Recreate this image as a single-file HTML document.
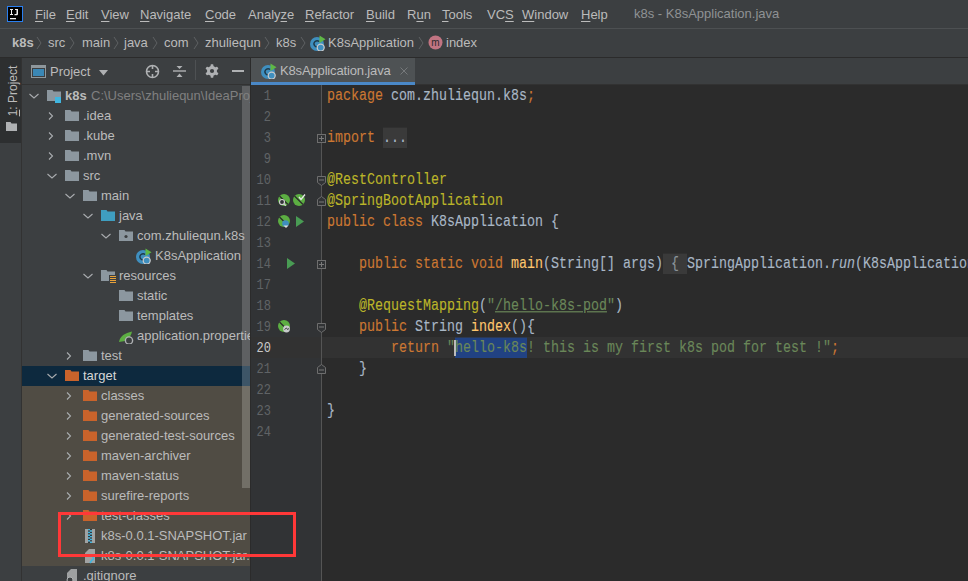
<!DOCTYPE html><html><head><meta charset="utf-8"><style>
*{margin:0;padding:0;box-sizing:border-box}
html,body{width:968px;height:581px;overflow:hidden;background:#3C3F41}
body{position:relative;font-family:"Liberation Sans",sans-serif;font-size:13px;color:#BBBBBB}
.abs{position:absolute}
.t{position:absolute;white-space:nowrap;line-height:16px}
.u{text-decoration:underline;text-underline-offset:2px}
.mono{font-family:"Liberation Mono",monospace;font-size:13.33px}
.cl{position:absolute;left:327px;white-space:pre;line-height:21px;height:21px;font-family:"Liberation Mono",monospace;font-size:13.33px;color:#A9B7C6;transform:translateY(1px) scaleY(1.2);transform-origin:0 14px;-webkit-text-stroke:0.1px currentColor}
.kw{color:#CC7832}
.an{color:#BBB529}
.st{color:#6A8759}
.ln{position:absolute;left:251px;width:20px;text-align:right;line-height:21px;font-family:"Liberation Mono",monospace;font-size:12px;color:#606366;transform:translateY(2px) scaleY(1.15);transform-origin:0 14px}
</style></head><body>
<div class="abs" style="left:0;top:28px;width:968px;height:1px;background:#4D5052"></div>
<svg style="position:absolute;left:7px;top:6px" width="16" height="16" viewBox="0 0 16 16"><rect x="0.5" y="0.5" width="15" height="15" fill="#000" stroke="#2A7FF0" stroke-width="1"/><path d="M3 3h3v1H5v4h1v1H3V8h1V4H3z" fill="#F0F0F0"/><path d="M8 3h3v5c0 1-.6 1.2-1.5 1.2H7.5V8H9c.4 0 .5-.2.5-.5V4H8z" fill="#F0F0F0"/><rect x="3" y="12" width="6" height="1.3" fill="#F0F0F0"/></svg>
<div class="t" style="left:35px;top:7px"><span class="u">F</span>ile</div>
<div class="t" style="left:66px;top:7px"><span class="u">E</span>dit</div>
<div class="t" style="left:101px;top:7px"><span class="u">V</span>iew</div>
<div class="t" style="left:140px;top:7px"><span class="u">N</span>avigate</div>
<div class="t" style="left:205px;top:7px"><span class="u">C</span>ode</div>
<div class="t" style="left:248px;top:7px">Analy<span class="u">z</span>e</div>
<div class="t" style="left:305px;top:7px"><span class="u">R</span>efactor</div>
<div class="t" style="left:366px;top:7px"><span class="u">B</span>uild</div>
<div class="t" style="left:407px;top:7px">R<span class="u">u</span>n</div>
<div class="t" style="left:442px;top:7px"><span class="u">T</span>ools</div>
<div class="t" style="left:487px;top:7px">VC<span class="u">S</span></div>
<div class="t" style="left:522px;top:7px"><span class="u">W</span>indow</div>
<div class="t" style="left:581px;top:7px"><span class="u">H</span>elp</div>
<div class="t" style="left:634px;top:6px;color:#8F9294">k8s - K8sApplication.java</div>
<div class="abs" style="left:0;top:57px;width:968px;height:1px;background:#2B2B2B"></div>
<div class="t" style="left:12px;top:35px;font-weight:bold">k8s</div>
<svg style="position:absolute;left:36px;top:36px" width="6" height="14" viewBox="0 0 6 14"><path d="M1 1l4 6-4 6" fill="none" stroke="#5E6163" stroke-width="1"/></svg>
<svg style="position:absolute;left:69px;top:36px" width="6" height="14" viewBox="0 0 6 14"><path d="M1 1l4 6-4 6" fill="none" stroke="#5E6163" stroke-width="1"/></svg>
<svg style="position:absolute;left:113px;top:36px" width="6" height="14" viewBox="0 0 6 14"><path d="M1 1l4 6-4 6" fill="none" stroke="#5E6163" stroke-width="1"/></svg>
<svg style="position:absolute;left:152px;top:36px" width="6" height="14" viewBox="0 0 6 14"><path d="M1 1l4 6-4 6" fill="none" stroke="#5E6163" stroke-width="1"/></svg>
<svg style="position:absolute;left:193px;top:36px" width="6" height="14" viewBox="0 0 6 14"><path d="M1 1l4 6-4 6" fill="none" stroke="#5E6163" stroke-width="1"/></svg>
<svg style="position:absolute;left:264px;top:36px" width="6" height="14" viewBox="0 0 6 14"><path d="M1 1l4 6-4 6" fill="none" stroke="#5E6163" stroke-width="1"/></svg>
<svg style="position:absolute;left:300px;top:36px" width="6" height="14" viewBox="0 0 6 14"><path d="M1 1l4 6-4 6" fill="none" stroke="#5E6163" stroke-width="1"/></svg>
<svg style="position:absolute;left:418px;top:36px" width="6" height="14" viewBox="0 0 6 14"><path d="M1 1l4 6-4 6" fill="none" stroke="#5E6163" stroke-width="1"/></svg>
<div class="t" style="left:48px;top:35px">src</div>
<div class="t" style="left:82px;top:35px">main</div>
<div class="t" style="left:124px;top:35px">java</div>
<div class="t" style="left:164px;top:35px">com</div>
<div class="t" style="left:205px;top:35px">zhuliequn</div>
<div class="t" style="left:276px;top:35px">k8s</div>
<svg style="position:absolute;left:310px;top:35px" width="16" height="16" viewBox="0 0 16 16"><circle cx="7" cy="9" r="7" fill="#3F8FBF"/><path d="M9.2 6.6A3.1 3.1 0 1 0 8.6 11.6" fill="none" stroke="#1F3A4A" stroke-width="1.4"/><path d="M9.5 0.5l6 3.8-6 3.8z" fill="#5FB846"/><circle cx="10.7" cy="12.6" r="3.5" fill="#3F8FBF" stroke="#C9CBCD" stroke-width="1.3"/></svg>
<div class="t" style="left:328px;top:35px">K8sApplication</div>
<svg style="position:absolute;left:428px;top:35px" width="15" height="15" viewBox="0 0 15 15"><circle cx="7.5" cy="7.5" r="7" fill="#F98B9E" fill-opacity=".7"/><text x="7.5" y="11" text-anchor="middle" font-family="Liberation Sans" font-size="10" fill="#2B2B2B">m</text></svg>
<div class="t" style="left:446px;top:35px">index</div>
<div class="abs" style="left:0;top:58px;width:21px;height:523px;background:#3C3F41"></div>
<div class="abs" style="left:0;top:58px;width:21px;height:85px;background:#2D2F30"></div>
<div class="abs" style="left:21px;top:58px;width:1px;height:523px;background:#323232"></div>
<div class="t" style="left:-22px;top:83px;width:70px;transform:rotate(-90deg);font-size:12px;text-align:center"><span class="u">1</span>: Project</div>
<svg style="position:absolute;left:6px;top:121px" width="12" height="12" viewBox="0 0 12 12"><path fill="#AFB1B3" d="M0 1h4.5l1 1.5H11V10H0z"/></svg>
<div class="abs" style="left:22px;top:84px;width:229px;height:1px;background:#323232"></div>
<svg style="position:absolute;left:31px;top:65px" width="15" height="13" viewBox="0 0 15 13"><rect x="0.5" y="0.5" width="14" height="12" fill="none" stroke="#8E979C" stroke-width="1"/><rect x="1" y="1" width="13" height="2" fill="#8E979C"/><rect x="2" y="4" width="11" height="7" fill="#3A87B5"/></svg>
<div class="t" style="left:50px;top:64px">Project</div>
<svg style="position:absolute;left:99px;top:70px" width="9" height="6" viewBox="0 0 9 6"><path d="M0 0h9L4.5 5.5z" fill="#AFB1B3"/></svg>
<svg style="position:absolute;left:145px;top:64px" width="15" height="15" viewBox="0 0 15 15"><circle cx="7.5" cy="7.5" r="6" fill="none" stroke="#AFB1B3" stroke-width="1.6"/><path d="M7.5 1v4M7.5 10v4M1 7.5h4M10 7.5h4" stroke="#AFB1B3" stroke-width="1.6"/></svg>
<svg style="position:absolute;left:173px;top:65px" width="13" height="13" viewBox="0 0 13 13"><path d="M0 6h13" stroke="#AFB1B3" stroke-width="1.4"/><path d="M3.5 1h6L6.5 4z M3.5 12h6L6.5 8.5z" fill="#AFB1B3"/></svg>
<div class="abs" style="left:195px;top:60px;width:1px;height:20px;background:#4E5153"></div>
<svg style="position:absolute;left:205px;top:64px" width="14" height="14" viewBox="0 0 14 14"><g fill="#AFB1B3"><circle cx="7" cy="7" r="5"/><rect x="5.6" y="0.3" width="2.8" height="13.4" rx="0.6" transform="rotate(0 7 7)"/><rect x="5.6" y="0.3" width="2.8" height="13.4" rx="0.6" transform="rotate(60 7 7)"/><rect x="5.6" y="0.3" width="2.8" height="13.4" rx="0.6" transform="rotate(120 7 7)"/></g><circle cx="7" cy="7" r="2.1" fill="#3C3F41"/></svg>
<div class="abs" style="left:232px;top:70px;width:12px;height:2px;background:#AFB1B3"></div>
<div class="abs" style="left:22px;top:366px;width:229px;height:20px;background:#0D293E"></div>
<div class="abs" style="left:22px;top:386px;width:229px;height:180px;background:#504C44"></div>
<div class="abs" style="left:242px;top:86px;width:8px;height:280px;background:#5E6062"></div>
<div class="abs" style="left:242px;top:366px;width:8px;height:20px;background:#3D5567"></div>
<div class="abs" style="left:242px;top:386px;width:8px;height:102px;background:#726F67"></div>
<div class="abs" style="left:22px;top:86px;width:228px;height:495px;overflow:hidden">
<svg style="position:absolute;left:6px;top:4px" width="12" height="12" viewBox="0 0 12 12"><path d="M1.5 4L6 8l4.5-4" fill="none" stroke="#A9ACAF" stroke-width="1.1"/></svg>
<svg style="position:absolute;left:24px;top:2px" width="16" height="16" viewBox="0 0 16 16"><path fill="#9AA7B0" fill-opacity="0.85" d="M1 2h5.5l1 1.5H15V13H1z"/><rect x="9" y="9" width="6" height="6" fill="#40B6E0"/></svg>
<div class="t" style="left:43px;top:2px;font-weight:bold">k8s</div>
<div class="t" style="left:69px;top:2px;color:#808080">C:\Users\zhuliequn\IdeaProjects\k8s</div>
<svg style="position:absolute;left:23px;top:24px" width="12" height="12" viewBox="0 0 12 12"><path d="M4 2.5l3.5 3.5L4 9.5" fill="none" stroke="#A9ACAF" stroke-width="1.1"/></svg>
<svg style="position:absolute;left:42px;top:22px" width="16" height="16" viewBox="0 0 16 16"><path fill="#9AA7B0" fill-opacity="0.85" d="M1 2h5.5l1 1.5H15V13H1z"/></svg>
<div class="t" style="left:61px;top:22px;color:#BBBBBB">.idea</div>
<svg style="position:absolute;left:23px;top:44px" width="12" height="12" viewBox="0 0 12 12"><path d="M4 2.5l3.5 3.5L4 9.5" fill="none" stroke="#A9ACAF" stroke-width="1.1"/></svg>
<svg style="position:absolute;left:42px;top:42px" width="16" height="16" viewBox="0 0 16 16"><path fill="#9AA7B0" fill-opacity="0.85" d="M1 2h5.5l1 1.5H15V13H1z"/></svg>
<div class="t" style="left:61px;top:42px;color:#BBBBBB">.kube</div>
<svg style="position:absolute;left:23px;top:64px" width="12" height="12" viewBox="0 0 12 12"><path d="M4 2.5l3.5 3.5L4 9.5" fill="none" stroke="#A9ACAF" stroke-width="1.1"/></svg>
<svg style="position:absolute;left:42px;top:62px" width="16" height="16" viewBox="0 0 16 16"><path fill="#9AA7B0" fill-opacity="0.85" d="M1 2h5.5l1 1.5H15V13H1z"/></svg>
<div class="t" style="left:61px;top:62px;color:#BBBBBB">.mvn</div>
<svg style="position:absolute;left:24px;top:84px" width="12" height="12" viewBox="0 0 12 12"><path d="M1.5 4L6 8l4.5-4" fill="none" stroke="#A9ACAF" stroke-width="1.1"/></svg>
<svg style="position:absolute;left:42px;top:82px" width="16" height="16" viewBox="0 0 16 16"><path fill="#9AA7B0" fill-opacity="0.85" d="M1 2h5.5l1 1.5H15V13H1z"/></svg>
<div class="t" style="left:61px;top:82px;color:#BBBBBB">src</div>
<svg style="position:absolute;left:42px;top:104px" width="12" height="12" viewBox="0 0 12 12"><path d="M1.5 4L6 8l4.5-4" fill="none" stroke="#A9ACAF" stroke-width="1.1"/></svg>
<svg style="position:absolute;left:60px;top:102px" width="16" height="16" viewBox="0 0 16 16"><path fill="#9AA7B0" fill-opacity="0.85" d="M1 2h5.5l1 1.5H15V13H1z"/></svg>
<div class="t" style="left:79px;top:102px;color:#BBBBBB">main</div>
<svg style="position:absolute;left:60px;top:124px" width="12" height="12" viewBox="0 0 12 12"><path d="M1.5 4L6 8l4.5-4" fill="none" stroke="#A9ACAF" stroke-width="1.1"/></svg>
<svg style="position:absolute;left:78px;top:122px" width="16" height="16" viewBox="0 0 16 16"><path fill="#40B6E0" fill-opacity="0.8" d="M1 2h5.5l1 1.5H15V13H1z"/></svg>
<div class="t" style="left:97px;top:122px;color:#BBBBBB">java</div>
<svg style="position:absolute;left:78px;top:144px" width="12" height="12" viewBox="0 0 12 12"><path d="M1.5 4L6 8l4.5-4" fill="none" stroke="#A9ACAF" stroke-width="1.1"/></svg>
<svg style="position:absolute;left:96px;top:142px" width="16" height="16" viewBox="0 0 16 16"><path fill="#9AA7B0" fill-opacity="0.85" d="M1 2h5.5l1 1.5H15V13H1z"/><circle cx="8" cy="8.5" r="1.6" fill="#3C3F41"/></svg>
<div class="t" style="left:115px;top:142px;color:#BBBBBB">com.zhuliequn.k8s</div>
<svg style="position:absolute;left:114px;top:162px" width="16" height="16" viewBox="0 0 16 16"><circle cx="7" cy="9" r="7" fill="#3F8FBF"/><path d="M9.2 6.6A3.1 3.1 0 1 0 8.6 11.6" fill="none" stroke="#1F3A4A" stroke-width="1.4"/><path d="M9.5 0.5l6 3.8-6 3.8z" fill="#5FB846"/><circle cx="10.7" cy="12.6" r="3.5" fill="#3F8FBF" stroke="#C9CBCD" stroke-width="1.3"/></svg>
<div class="t" style="left:133px;top:162px;color:#BBBBBB">K8sApplication</div>
<svg style="position:absolute;left:60px;top:184px" width="12" height="12" viewBox="0 0 12 12"><path d="M1.5 4L6 8l4.5-4" fill="none" stroke="#A9ACAF" stroke-width="1.1"/></svg>
<svg style="position:absolute;left:78px;top:182px" width="16" height="16" viewBox="0 0 16 16"><path fill="#9AA7B0" fill-opacity="0.85" d="M1 2h5.5l1 1.5H15V13H1z"/><rect x="9" y="7" width="7" height="9" fill="#3C3F41"/><path d="M10 8.5h6M10 10.5h6M10 12.5h6M10 14.5h6" stroke="#E8A23A" stroke-width="1"/></svg>
<div class="t" style="left:97px;top:182px;color:#BBBBBB">resources</div>
<svg style="position:absolute;left:96px;top:202px" width="16" height="16" viewBox="0 0 16 16"><path fill="#9AA7B0" fill-opacity="0.85" d="M1 2h5.5l1 1.5H15V13H1z"/></svg>
<div class="t" style="left:115px;top:202px;color:#BBBBBB">static</div>
<svg style="position:absolute;left:96px;top:222px" width="16" height="16" viewBox="0 0 16 16"><path fill="#9AA7B0" fill-opacity="0.85" d="M1 2h5.5l1 1.5H15V13H1z"/></svg>
<div class="t" style="left:115px;top:222px;color:#BBBBBB">templates</div>
<svg style="position:absolute;left:96px;top:242px" width="16" height="16" viewBox="0 0 16 16"><path d="M1 14C2 8 7 5 14 3.5C13 9 9 13 4 13.5z" fill="#5CAE42"/><circle cx="11" cy="12.5" r="3.6" fill="#3C3F41" stroke="#AFB1B3" stroke-width="1.4"/></svg>
<div class="t" style="left:115px;top:242px;color:#BBBBBB">application.properties</div>
<svg style="position:absolute;left:41px;top:264px" width="12" height="12" viewBox="0 0 12 12"><path d="M4 2.5l3.5 3.5L4 9.5" fill="none" stroke="#A9ACAF" stroke-width="1.1"/></svg>
<svg style="position:absolute;left:60px;top:262px" width="16" height="16" viewBox="0 0 16 16"><path fill="#9AA7B0" fill-opacity="0.85" d="M1 2h5.5l1 1.5H15V13H1z"/></svg>
<div class="t" style="left:79px;top:262px;color:#BBBBBB">test</div>
<svg style="position:absolute;left:24px;top:284px" width="12" height="12" viewBox="0 0 12 12"><path d="M1.5 4L6 8l4.5-4" fill="none" stroke="#A9ACAF" stroke-width="1.1"/></svg>
<svg style="position:absolute;left:42px;top:282px" width="16" height="16" viewBox="0 0 16 16"><path fill="#C9632B" fill-opacity="1" d="M1 2h5.5l1 1.5H15V13H1z"/></svg>
<div class="t" style="left:61px;top:282px;color:#D6D6D6">target</div>
<svg style="position:absolute;left:41px;top:304px" width="12" height="12" viewBox="0 0 12 12"><path d="M4 2.5l3.5 3.5L4 9.5" fill="none" stroke="#A9ACAF" stroke-width="1.1"/></svg>
<svg style="position:absolute;left:60px;top:302px" width="16" height="16" viewBox="0 0 16 16"><path fill="#C9632B" fill-opacity="1" d="M1 2h5.5l1 1.5H15V13H1z"/></svg>
<div class="t" style="left:79px;top:302px;color:#BBBBBB">classes</div>
<svg style="position:absolute;left:41px;top:324px" width="12" height="12" viewBox="0 0 12 12"><path d="M4 2.5l3.5 3.5L4 9.5" fill="none" stroke="#A9ACAF" stroke-width="1.1"/></svg>
<svg style="position:absolute;left:60px;top:322px" width="16" height="16" viewBox="0 0 16 16"><path fill="#C9632B" fill-opacity="1" d="M1 2h5.5l1 1.5H15V13H1z"/></svg>
<div class="t" style="left:79px;top:322px;color:#BBBBBB">generated-sources</div>
<svg style="position:absolute;left:41px;top:344px" width="12" height="12" viewBox="0 0 12 12"><path d="M4 2.5l3.5 3.5L4 9.5" fill="none" stroke="#A9ACAF" stroke-width="1.1"/></svg>
<svg style="position:absolute;left:60px;top:342px" width="16" height="16" viewBox="0 0 16 16"><path fill="#C9632B" fill-opacity="1" d="M1 2h5.5l1 1.5H15V13H1z"/></svg>
<div class="t" style="left:79px;top:342px;color:#BBBBBB">generated-test-sources</div>
<svg style="position:absolute;left:41px;top:364px" width="12" height="12" viewBox="0 0 12 12"><path d="M4 2.5l3.5 3.5L4 9.5" fill="none" stroke="#A9ACAF" stroke-width="1.1"/></svg>
<svg style="position:absolute;left:60px;top:362px" width="16" height="16" viewBox="0 0 16 16"><path fill="#C9632B" fill-opacity="1" d="M1 2h5.5l1 1.5H15V13H1z"/></svg>
<div class="t" style="left:79px;top:362px;color:#BBBBBB">maven-archiver</div>
<svg style="position:absolute;left:41px;top:384px" width="12" height="12" viewBox="0 0 12 12"><path d="M4 2.5l3.5 3.5L4 9.5" fill="none" stroke="#A9ACAF" stroke-width="1.1"/></svg>
<svg style="position:absolute;left:60px;top:382px" width="16" height="16" viewBox="0 0 16 16"><path fill="#C9632B" fill-opacity="1" d="M1 2h5.5l1 1.5H15V13H1z"/></svg>
<div class="t" style="left:79px;top:382px;color:#BBBBBB">maven-status</div>
<svg style="position:absolute;left:41px;top:404px" width="12" height="12" viewBox="0 0 12 12"><path d="M4 2.5l3.5 3.5L4 9.5" fill="none" stroke="#A9ACAF" stroke-width="1.1"/></svg>
<svg style="position:absolute;left:60px;top:402px" width="16" height="16" viewBox="0 0 16 16"><path fill="#C9632B" fill-opacity="1" d="M1 2h5.5l1 1.5H15V13H1z"/></svg>
<div class="t" style="left:79px;top:402px;color:#BBBBBB">surefire-reports</div>
<svg style="position:absolute;left:41px;top:424px" width="12" height="12" viewBox="0 0 12 12"><path d="M4 2.5l3.5 3.5L4 9.5" fill="none" stroke="#A9ACAF" stroke-width="1.1"/></svg>
<svg style="position:absolute;left:60px;top:422px" width="16" height="16" viewBox="0 0 16 16"><path fill="#C9632B" fill-opacity="1" d="M1 2h5.5l1 1.5H15V13H1z"/></svg>
<div class="t" style="left:79px;top:422px;color:#BBBBBB">test-classes</div>
<svg style="position:absolute;left:60px;top:442px" width="16" height="16" viewBox="0 0 16 16"><rect x="3" y="1" width="10" height="14" fill="#AFB1B3" fill-opacity=".85"/><rect x="6" y="1.0" width="2" height="1.4" fill="#40B6E0"/><rect x="8" y="1.0" width="2" height="1.4" fill="#2D3A40"/><rect x="8" y="2.4" width="2" height="1.4" fill="#40B6E0"/><rect x="6" y="2.4" width="2" height="1.4" fill="#2D3A40"/><rect x="6" y="3.8" width="2" height="1.4" fill="#40B6E0"/><rect x="8" y="3.8" width="2" height="1.4" fill="#2D3A40"/><rect x="8" y="5.2" width="2" height="1.4" fill="#40B6E0"/><rect x="6" y="5.2" width="2" height="1.4" fill="#2D3A40"/><rect x="6" y="6.6" width="2" height="1.4" fill="#40B6E0"/><rect x="8" y="6.6" width="2" height="1.4" fill="#2D3A40"/><rect x="8" y="8.0" width="2" height="1.4" fill="#40B6E0"/><rect x="6" y="8.0" width="2" height="1.4" fill="#2D3A40"/><rect x="6" y="9.4" width="2" height="1.4" fill="#40B6E0"/><rect x="8" y="9.4" width="2" height="1.4" fill="#2D3A40"/><rect x="8" y="10.8" width="2" height="1.4" fill="#40B6E0"/><rect x="6" y="10.8" width="2" height="1.4" fill="#2D3A40"/><rect x="6" y="12.2" width="2" height="1.4" fill="#40B6E0"/><rect x="8" y="12.2" width="2" height="1.4" fill="#2D3A40"/><rect x="8" y="13.6" width="2" height="1.4" fill="#40B6E0"/><rect x="6" y="13.6" width="2" height="1.4" fill="#2D3A40"/></svg>
<div class="t" style="left:79px;top:442px;color:#BBBBBB">k8s-0.0.1-SNAPSHOT.jar</div>
<svg style="position:absolute;left:60px;top:462px" width="16" height="16" viewBox="0 0 16 16"><path d="M7 1h6v14H3V5z" fill="#AFB1B3" fill-opacity=".85"/><path d="M10 9c2 0 2 3 0 3l-2 3" fill="none" stroke="#40B6E0" stroke-width="1.5"/></svg>
<div class="t" style="left:79px;top:462px;color:#BBBBBB">k8s-0.0.1-SNAPSHOT.jar.original</div>
<svg style="position:absolute;left:42px;top:482px" width="16" height="16" viewBox="0 0 16 16"><path d="M7 1h6v14H3V5z" fill="#AFB1B3" fill-opacity=".85"/><circle cx="6" cy="12" r="3" fill="#3C3F41" stroke="#AFB1B3"/></svg>
<div class="t" style="left:61px;top:482px;color:#BBBBBB">.gitignore</div>
</div>
<div class="abs" style="left:251px;top:58px;width:717px;height:27px;background:#3C3F41"></div>
<div class="abs" style="left:251px;top:84px;width:717px;height:1px;background:#323232"></div>
<div class="abs" style="left:251px;top:58px;width:164px;height:27px;background:#4E5254"></div>
<div class="abs" style="left:251px;top:82px;width:164px;height:3px;background:#4A88C7"></div>
<svg style="position:absolute;left:261px;top:63px" width="16" height="16" viewBox="0 0 16 16"><circle cx="7" cy="9" r="7" fill="#3F8FBF"/><path d="M9.2 6.6A3.1 3.1 0 1 0 8.6 11.6" fill="none" stroke="#1F3A4A" stroke-width="1.4"/><path d="M9.5 0.5l6 3.8-6 3.8z" fill="#5FB846"/><circle cx="10.7" cy="12.6" r="3.5" fill="#3F8FBF" stroke="#C9CBCD" stroke-width="1.3"/></svg>
<div class="t" style="left:280px;top:63px;letter-spacing:-0.15px">K8sApplication.java</div>
<svg style="position:absolute;left:399px;top:66px" width="10" height="10" viewBox="0 0 10 10"><path d="M1.5 1.5l7 7M8.5 1.5l-7 7" stroke="#76797B" stroke-width="1"/></svg>
<div class="abs" style="left:250px;top:58px;width:1px;height:523px;background:#2B2B2B"></div>
<div class="abs" style="left:251px;top:85px;width:71px;height:496px;background:#313335"></div>
<div class="abs" style="left:322px;top:85px;width:646px;height:496px;background:#2B2B2B"></div>
<div class="abs" style="left:321px;top:85px;width:1px;height:496px;background:#555555"></div>
<div class="abs" style="left:251px;top:337px;width:717px;height:21px;background:#323232"></div>
<div class="abs" style="left:321px;top:337px;width:1px;height:21px;background:#555555"></div>
<div class="ln" style="top:85px;color:#606366">1</div>
<div class="ln" style="top:106px;color:#606366">2</div>
<div class="ln" style="top:127px;color:#606366">3</div>
<div class="ln" style="top:148px;color:#606366">9</div>
<div class="ln" style="top:169px;color:#606366">10</div>
<div class="ln" style="top:190px;color:#606366">11</div>
<div class="ln" style="top:211px;color:#606366">12</div>
<div class="ln" style="top:232px;color:#606366">13</div>
<div class="ln" style="top:253px;color:#606366">14</div>
<div class="ln" style="top:274px;color:#606366">17</div>
<div class="ln" style="top:295px;color:#606366">18</div>
<div class="ln" style="top:316px;color:#606366">19</div>
<div class="ln" style="top:337px;color:#C8C8C8">20</div>
<div class="ln" style="top:358px;color:#606366">21</div>
<div class="ln" style="top:379px;color:#606366">22</div>
<div class="ln" style="top:400px;color:#606366">23</div>
<div class="ln" style="top:421px;color:#606366">24</div>
<div class="cl" style="top:85px"><span class="kw">package</span> com.zhuliequn.k8s<span class="kw">;</span></div>
<div class="cl" style="top:106px"></div>
<div class="cl" style="top:127px"><span class="kw">import</span> <span style="background:#3A3A3A;color:#A9B7C6;padding:1.25px 0 0.7px">...</span></div>
<div class="cl" style="top:148px"></div>
<div class="cl" style="top:169px"><span class="an">@RestController</span></div>
<div class="cl" style="top:190px"><span class="an">@SpringBootApplication</span></div>
<div class="cl" style="top:211px"><span class="kw">public class</span> K8sApplication {</div>
<div class="cl" style="top:232px"></div>
<div class="cl" style="top:253px">    <span class="kw">public static void</span> <span style="color:#FFC66D">main</span>(String[] args)<span style="background:#3A3A3A;padding:1.25px 0 0.7px;color:#8A949B"> { </span>SpringApplication.<i>run</i>(K8sApplication.<span class="kw">class</span>, args)<span class="kw">;</span> }</div>
<div class="cl" style="top:274px"></div>
<div class="cl" style="top:295px">    <span class="an">@RequestMapping</span>(<span class="st">"<u>/hello-k8s-pod</u>"</span>)</div>
<div class="cl" style="top:316px">    <span class="kw">public</span> String <span style="color:#FFC66D">index</span>(){</div>
<div class="cl" style="top:337px">        <span class="kw">return</span> <span class="st">"<span style="background:#214283;padding:1.25px 0 0.7px">hello-k8s</span>! this is my first k8s pod for test !"</span><span class="kw">;</span></div>
<div class="cl" style="top:358px">    }</div>
<div class="cl" style="top:379px"></div>
<div class="cl" style="top:400px">}</div>
<div class="cl" style="top:421px"></div>
<div class="abs" style="left:454px;top:340px;width:2px;height:16px;background:#BBBBBB"></div>
<svg style="position:absolute;left:316px;top:133px" width="11" height="11" viewBox="0 0 11 11"><rect x="1.5" y="1.5" width="8" height="8" fill="#313335" stroke="#6E6E6E"/><path d="M3 5.5h5M5.5 3v5" stroke="#7A7A7A"/></svg>
<svg style="position:absolute;left:316px;top:175px" width="11" height="11" viewBox="0 0 11 11"><path d="M1.5 1.5h8v6l-4 3-4-3z" fill="#313335" stroke="#6E6E6E"/><path d="M3 5h5" stroke="#7A7A7A"/></svg>
<svg style="position:absolute;left:316px;top:196px" width="11" height="11" viewBox="0 0 11 11"><path d="M1.5 9.5h8v-6l-4-3-4 3z" fill="#313335" stroke="#6E6E6E"/><path d="M3 6h5" stroke="#7A7A7A"/></svg>
<svg style="position:absolute;left:316px;top:259px" width="11" height="11" viewBox="0 0 11 11"><rect x="1.5" y="1.5" width="8" height="8" fill="#313335" stroke="#6E6E6E"/><path d="M3 5.5h5M5.5 3v5" stroke="#7A7A7A"/></svg>
<svg style="position:absolute;left:316px;top:322px" width="11" height="11" viewBox="0 0 11 11"><path d="M1.5 1.5h8v6l-4 3-4-3z" fill="#313335" stroke="#6E6E6E"/><path d="M3 5h5" stroke="#7A7A7A"/></svg>
<svg style="position:absolute;left:316px;top:364px" width="11" height="11" viewBox="0 0 11 11"><path d="M1.5 9.5h8v-6l-4-3-4 3z" fill="#313335" stroke="#6E6E6E"/><path d="M3 6h5" stroke="#7A7A7A"/></svg>
<svg style="position:absolute;left:277px;top:193px" width="14" height="14" viewBox="0 0 14 14"><circle cx="7" cy="7" r="6" fill="#5CAE42"/><path d="M2.5 3l8.5 8.5" stroke="#2B2B2B" stroke-width="1.2"/><circle cx="5" cy="9" r="2.5" fill="#313335" stroke="#CFCFCF" stroke-width="1.2"/><path d="M6.8 10.8l2 2" stroke="#CFCFCF" stroke-width="1.4"/></svg>
<svg style="position:absolute;left:292px;top:193px" width="14" height="14" viewBox="0 0 14 14"><circle cx="7" cy="7" r="6" fill="#5CAE42"/><path d="M2.5 3l8.5 8.5" stroke="#2B2B2B" stroke-width="1.2"/><path d="M7 4l2 2.5 4-5" fill="none" stroke="#E8E8E8" stroke-width="1.3"/></svg>
<svg style="position:absolute;left:277px;top:214px" width="14" height="14" viewBox="0 0 14 14"><circle cx="7" cy="7" r="6" fill="#5CAE42"/><path d="M2.5 3l8.5 8.5" stroke="#2B2B2B" stroke-width="1.2"/><circle cx="8.5" cy="9.5" r="3.3" fill="#3F8FBF"/><path d="M6.5 11.5h5l-2.5 2.5z" fill="#DDDDDD"/></svg>
<svg style="position:absolute;left:296px;top:216px" width="9" height="11" viewBox="0 0 9 11"><path d="M0 0l8 5.5L0 11z" fill="#499C54"/></svg>
<svg style="position:absolute;left:287px;top:258px" width="9" height="11" viewBox="0 0 9 11"><path d="M0 0l8 5.5L0 11z" fill="#499C54"/></svg>
<svg style="position:absolute;left:277px;top:319px" width="14" height="14" viewBox="0 0 14 14"><circle cx="7" cy="7" r="6" fill="#5CAE42"/><path d="M2.5 3l8.5 8.5" stroke="#2B2B2B" stroke-width="1.2"/><circle cx="9.5" cy="10" r="3.4" fill="#C8CACC"/><path d="M7.5 10.5l2-1.5 1 1.5 1.5-1" fill="none" stroke="#3C3F41" stroke-width="1"/></svg>
<div class="abs" style="left:58px;top:512px;width:238px;height:45px;border:3px solid #FF3838"></div>
</body></html>
